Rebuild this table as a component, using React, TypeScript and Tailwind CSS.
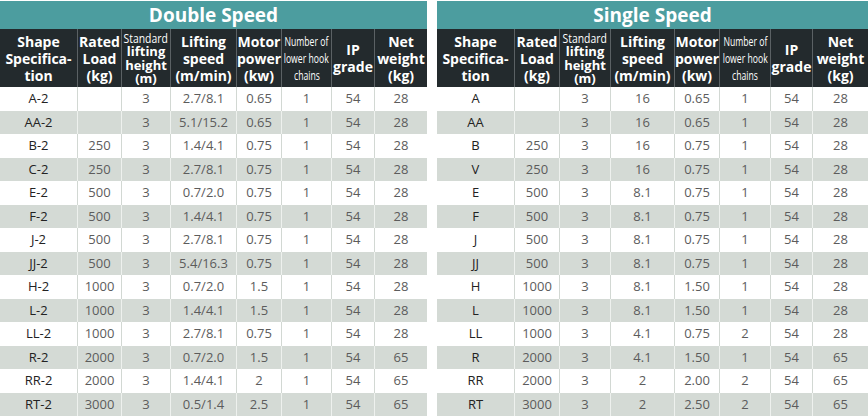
const leftRows = [
  ["A-2", "", "3", "2.7/8.1", "0.65", "1", "54", "28"],
  ["AA-2", "", "3", "5.1/15.2", "0.65", "1", "54", "28"],
  ["B-2", "250", "3", "1.4/4.1", "0.75", "1", "54", "28"],
  ["C-2", "250", "3", "2.7/8.1", "0.75", "1", "54", "28"],
  ["E-2", "500", "3", "0.7/2.0", "0.75", "1", "54", "28"],
  ["F-2", "500", "3", "1.4/4.1", "0.75", "1", "54", "28"],
  ["J-2", "500", "3", "2.7/8.1", "0.75", "1", "54", "28"],
  ["JJ-2", "500", "3", "5.4/16.3", "0.75", "1", "54", "28"],
  ["H-2", "1000", "3", "0.7/2.0", "1.5", "1", "54", "28"],
  ["L-2", "1000", "3", "1.4/4.1", "1.5", "1", "54", "28"],
  ["LL-2", "1000", "3", "2.7/8.1", "0.75", "1", "54", "28"],
  ["R-2", "2000", "3", "0.7/2.0", "1.5", "1", "54", "65"],
  ["RR-2", "2000", "3", "1.4/4.1", "2", "1", "54", "65"],
  ["RT-2", "3000", "3", "0.5/1.4", "2.5", "1", "54", "65"],
];

const rightRows = [
  ["A", "", "3", "16", "0.65", "1", "54", "28"],
  ["AA", "", "3", "16", "0.65", "1", "54", "28"],
  ["B", "250", "3", "16", "0.75", "1", "54", "28"],
  ["V", "250", "3", "16", "0.75", "1", "54", "28"],
  ["E", "500", "3", "8.1", "0.75", "1", "54", "28"],
  ["F", "500", "3", "8.1", "0.75", "1", "54", "28"],
  ["J", "500", "3", "8.1", "0.75", "1", "54", "28"],
  ["JJ", "500", "3", "8.1", "0.75", "1", "54", "28"],
  ["H", "1000", "3", "8.1", "1.50", "1", "54", "28"],
  ["L", "1000", "3", "8.1", "1.50", "1", "54", "28"],
  ["LL", "1000", "3", "4.1", "0.75", "2", "54", "28"],
  ["R", "2000", "3", "4.1", "1.50", "1", "54", "65"],
  ["RR", "2000", "3", "2", "2.00", "2", "54", "65"],
  ["RT", "3000", "3", "2", "2.50", "2", "54", "65"],
];

function HeaderRow() {
  const cell =
    "flex flex-col items-center justify-center border-r border-[#5b6164] last:border-r-0 text-center whitespace-nowrap";
  return (
    <>
      <div className={cell + " leading-[17px]"}>
        <span>Shape</span>
        <span>Specifica-</span>
        <span>tion</span>
      </div>
      <div className={cell + " leading-[17px]"}>
        <span>Rated</span>
        <span>Load</span>
        <span>(kg)</span>
      </div>
      <div className={cell + " text-[13px] leading-[13.5px] pt-px"}>
        <span className="inline-block scale-x-[0.8] font-normal">Standard</span>
        <span>lifting</span>
        <span>height</span>
        <span>(m)</span>
      </div>
      <div className={cell + " leading-[17px]"}>
        <span>Lifting</span>
        <span>speed</span>
        <span>(m/min)</span>
      </div>
      <div className={cell + " leading-[17px]"}>
        <span>Motor</span>
        <span>power</span>
        <span>(kw)</span>
      </div>
      <div className={cell + " font-normal text-[12px] leading-[17px]"}>
        <span className="inline-block scale-x-[0.72]">Number of</span>
        <span className="inline-block scale-x-[0.72]">lower hook</span>
        <span className="inline-block scale-x-[0.72]">chains</span>
      </div>
      <div className={cell + " leading-[17px]"}>
        <span>IP</span>
        <span>grade</span>
      </div>
      <div className={cell + " leading-[17px]"}>
        <span>Net</span>
        <span>weight</span>
        <span>(kg)</span>
      </div>
    </>
  );
}

function SpecTable({
  title,
  rows,
  cols,
  width,
}: {
  title: string;
  rows: string[][];
  cols: string;
  width: string;
}) {
  return (
    <div className={"flex flex-col pt-px " + width}>
      <div className="h-[28px] bg-[#4c9d9f] flex items-center justify-center text-white font-bold text-[19px]">
        {title}
      </div>
      <div className={"grid h-[58px] bg-[#232a2d] text-white font-bold text-[14px] " + cols}>
        <HeaderRow />
      </div>
      {rows.map((r, i) => {
        const odd = i % 2 === 1;
        return (
          <div
            key={i}
            className={
              "grid h-[23.5px] text-[13px] " +
              cols +
              (odd ? " bg-[#d4dad5]" : " bg-white")
            }
          >
            {r.map((v, j) => (
              <div
                key={j}
                className={
                  "flex items-center justify-center border-r last:border-r-0 " +
                  (odd ? "border-[#eef1ee] " : "border-[#d2d8d3] ") +
                  (j === 0 ? "text-[#222]" : "text-[#5c5c5c]")
                }
              >
                {v}
              </div>
            ))}
          </div>
        );
      })}
    </div>
  );
}

export default function App() {
  return (
    <div
      className="flex gap-[10px] w-[868px] h-[416px] overflow-hidden bg-white"
      style={{ fontFamily: '"Open Sans", "Noto Sans", sans-serif' }}
    >
      <SpecTable
        title="Double Speed"
        rows={leftRows}
        width="w-[427px]"
        cols="grid-cols-[78px_44px_49px_66px_45px_50px_43px_52px]"
      />
      <SpecTable
        title="Single Speed"
        rows={rightRows}
        width="w-[431px]"
        cols="grid-cols-[78px_45px_51px_64px_45px_51px_42px_55px]"
      />
    </div>
  );
}
